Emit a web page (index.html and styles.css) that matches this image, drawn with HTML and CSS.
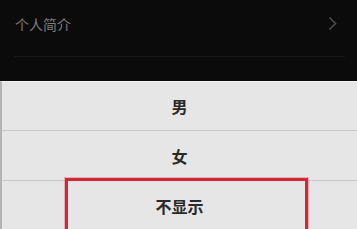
FILE: index.html
```html
<!DOCTYPE html>
<html lang="zh-CN">
<head>
  <meta charset="UTF-8" />
  <meta name="viewport" content="width=device-width, initial-scale=1.0"/>
  <title>性别</title>
  <link rel="stylesheet" href="styles.css">
</head>
<body>
  <div class="profile">
    <div class="profile-row">
      <span class="profile-label">个人简介</span>
      <svg class="chevron" width="9" height="15" viewBox="0 0 9 15">
        <path d="M1.5 1.5 L7.5 7.5 L1.5 13.5" fill="none" stroke="#4a4a4a" stroke-width="1.6"/>
      </svg>
    </div>
  </div>

  <div class="sheet">
    <div class="option">男</div>
    <div class="option">女</div>
    <div class="option">
      不显示
      <span class="highlight"></span>
    </div>
  </div>
</body>
</html>
```

FILE: styles.css
```css
* {
  margin: 0;
  padding: 0;
  box-sizing: border-box;
  font-family: "Noto Sans CJK SC", "Noto Sans", sans-serif;
}

body {
  width: 357px;
  height: 229px;
  overflow: hidden;
  background: #e6e6e6;
}

.profile {
  height: 81px;
  background: #0b0b0b;
  padding: 0 12px 0 14px;
}

.profile-row {
  height: 57px;
  display: flex;
  align-items: center;
  justify-content: space-between;
  padding: 0 8px 9px 1px;
  border-bottom: 1px solid #171717;
}

.profile-label {
  font-size: 14px;
  color: #7c7c7c;
}

.chevron {
  display: block;
}

.sheet {
  background: #e6e6e6;
  border-top: 1px solid #f4f4f4;
  border-left: 2px solid #b4b4b4;
}

.option {
  position: relative;
  height: 50px;
  display: flex;
  align-items: center;
  justify-content: center;
  font-size: 16px;
  font-weight: 600;
  color: #2a2a2a;
  border-bottom: 1px solid #c9c9c9;
}

.option:first-child {
  height: 49px;
}

.highlight {
  position: absolute;
  left: 63px;
  top: -3px;
  width: 243px;
  height: 60px;
  border: 3px solid #d12a36;
  box-shadow: 0 0 0 1px rgba(230, 120, 130, 0.5);
}
```
